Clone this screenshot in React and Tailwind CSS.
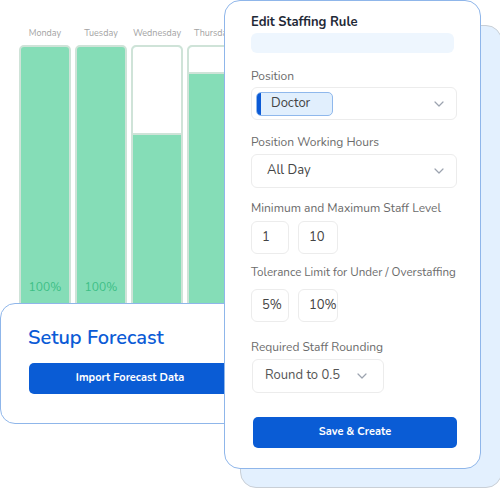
import React from "react";

const font = { fontFamily: '"Nunito", "Lato", "Open Sans", sans-serif' };

function Chevron({ className }) {
  return (
    <svg className={className} width="10" height="6" viewBox="0 0 10 6" fill="none">
      <path d="M1 1l4 4 4-4" stroke="#9ca3af" strokeWidth="1.2" strokeLinecap="round" strokeLinejoin="round" />
    </svg>
  );
}

function Bar({ label, white, pct }) {
  return (
    <div className="flex flex-col items-center w-[52px] shrink-0">
      <div className="h-[24px] text-[9px] leading-[24px] text-[#a3a3a3] whitespace-nowrap">{label}</div>
      <div className="w-full h-[270px] rounded-t-[5px] border-2 border-[#cfe3d8] bg-[#85ddb7] flex flex-col overflow-hidden">
        {white > 0 && <div className="w-full bg-white border-b-2 border-[#cfe3d8]" style={{ height: white }} />}
        <div className="flex-1 flex items-end justify-center pb-[18px]">
          {pct && <span className="text-[12px] leading-[16px] text-[#3dbf86]">{pct}</span>}
        </div>
      </div>
    </div>
  );
}

function Label({ children, className = "", size = "text-[12px]" }) {
  return <div className={`${size} leading-[16px] text-[#6b6b6b] whitespace-nowrap ${className}`}>{children}</div>;
}

function SmallInput({ children, w = "w-[38px]" }) {
  return (
    <div className={`${w} h-[33px] rounded-[6px] border border-[#ececec] flex items-center pl-[10px] text-[13px] text-[#444]`}>
      {children}
    </div>
  );
}

export default function App() {
  return (
    <div className="relative w-[500px] h-[488px] bg-white overflow-hidden" style={font}>
      {/* back panel */}
      <div className="absolute left-[240px] top-[25px] w-[262px] h-[463px] rounded-[16px] bg-[#e3f0fe] border border-[#c9cfd6]" />

      {/* chart */}
      <div className="absolute left-[19px] top-[21px] flex gap-[4px]">
        <Bar label="Monday" white={0} pct="100%" />
        <Bar label="Tuesday" white={0} pct="100%" />
        <Bar label="Wednesday" white={88} />
        <Bar label="Thursday" white={27} />
      </div>

      {/* setup forecast card */}
      <div className="absolute left-0 top-[303px] w-[260px] h-[121px] rounded-[15px] border border-[#8fb6ea] bg-white pl-[27px] pt-[20px]">
        <div className="text-[20px] leading-[28px] font-semibold text-[#0b5bd6]">Setup Forecast</div>
        <div className="mt-[11px] ml-[1px] w-[202px] h-[31px] rounded-[5px] bg-[#0a5cd5] flex items-center justify-center text-[11px] font-bold text-white">
          Import Forecast Data
        </div>
      </div>

      {/* edit staffing rule card */}
      <div className="absolute left-[224px] top-0 w-[257px] h-[469px] rounded-[16px] border border-[#8fb6ea] bg-white pl-[26px] pr-[20px] pt-[12px] flex flex-col">
        <div className="text-[13px] leading-[18px] font-bold text-[#1f2937]">Edit Staffing Rule</div>
        <div className="mt-[2px] w-[203px] h-[20px] rounded-[6px] bg-[#eef6fe]" />

        <Label className="mt-[15px]">Position</Label>
        <div className="mt-[3px] w-[206px] h-[33px] rounded-[6px] border border-[#ececec] flex items-center justify-between pl-[4px] pr-[12px]">
          <div className="h-[24px] w-[77px] rounded-[5px] border border-[#8fb8ec] bg-[#e1effd] flex overflow-hidden">
            <div className="w-[4px] h-full bg-[#0b5ad6]" />
            <div className="flex items-center pl-[10px] text-[13px] text-[#444]">Doctor</div>
          </div>
          <Chevron />
        </div>

        <Label className="mt-[14px]">Position Working Hours</Label>
        <div className="mt-[4px] w-[206px] h-[34px] rounded-[6px] border border-[#ececec] flex items-center justify-between pl-[15px] pr-[12px]">
          <span className="text-[13px] text-[#444]">All Day</span>
          <Chevron />
        </div>

        <Label className="mt-[12px]">Minimum and Maximum Staff Level</Label>
        <div className="mt-[5px] flex gap-[9px]">
          <SmallInput>1</SmallInput>
          <SmallInput w="w-[40px]">10</SmallInput>
        </div>

        <Label className="mt-[10px]" size="text-[11.6px]">Tolerance Limit for Under / Overstaffing</Label>
        <div className="mt-[9px] flex gap-[9px]">
          <SmallInput>5%</SmallInput>
          <SmallInput w="w-[40px]">10%</SmallInput>
        </div>

        <Label className="mt-[17px]">Required Staff Rounding</Label>
        <div className="mt-[4px] ml-[1px] w-[132px] h-[34px] rounded-[6px] border border-[#ececec] flex items-center justify-between pl-[12px] pr-[16px]">
          <span className="text-[13px] text-[#555]">Round to 0.5</span>
          <Chevron />
        </div>

        <div className="mt-[24px] ml-[2px] w-[204px] h-[31px] rounded-[5px] bg-[#0a5cd5] flex items-center justify-center text-[11px] font-bold text-white">
          Save &amp; Create
        </div>
      </div>
    </div>
  );
}
